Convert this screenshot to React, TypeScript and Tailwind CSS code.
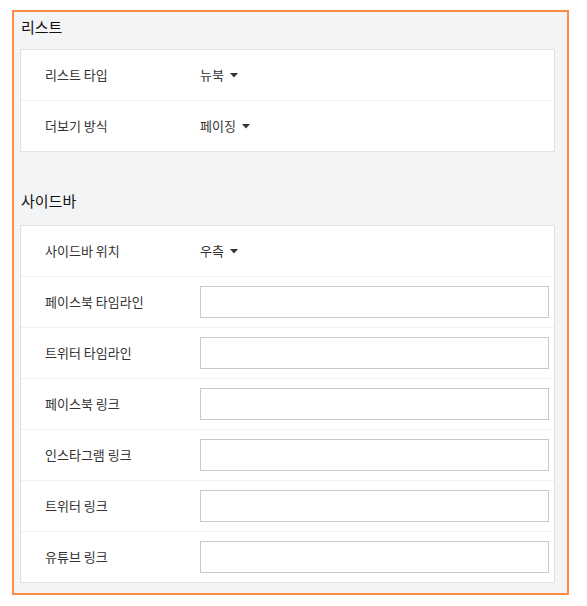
import React from "react";

const font = { fontFamily: '"Noto Sans CJK KR", "Noto Sans", sans-serif' };

function Caret() {
  return (
    <svg width="8" height="5" viewBox="0 0 8 5" className="ml-[6px] mt-[1px]">
      <path d="M0 0 L8 0 L4 4.5 Z" fill="#333" />
    </svg>
  );
}

function Row({ label, children, last }: { label: string; children: React.ReactNode; last?: boolean }) {
  return (
    <div className={`flex items-center ${last ? "h-[50px]" : "h-[51px] border-b border-[#eef0f3]"}`}>
      <div className="w-[179px] shrink-0 pl-[24px] text-[13px] text-[#333]">{label}</div>
      <div className="flex flex-1 items-center pr-[5px]">{children}</div>
    </div>
  );
}

function Select({ value }: { value: string }) {
  return (
    <div className="flex items-center text-[13px] text-[#333]">
      <span>{value}</span>
      <Caret />
    </div>
  );
}

function Input() {
  return <div className="h-[32px] w-full border border-[#c3cad4] bg-white" />;
}

export default function App() {
  const links = ["페이스북 타임라인", "트위터 타임라인", "페이스북 링크", "인스타그램 링크", "트위터 링크", "유튜브 링크"];
  return (
    <div className="h-[606px] w-[587px] bg-white" style={font}>
      <div className="absolute left-[12px] top-[10px] h-[585px] w-[557px] border-2 border-[#ff8c42] bg-[#f3f4f6] pl-[6px] pr-[12px] pt-[4px]">
        <div className="pl-[1px] text-[15px] font-normal leading-[22px] text-[#111]">리스트</div>
        <div className="mt-[11px] border border-[#dfe3e8] bg-white">
          <Row label="리스트 타입">
            <Select value="뉴북" />
          </Row>
          <Row label="더보기 방식" last>
            <Select value="페이징" />
          </Row>
        </div>
        <div className="mt-[38px] pl-[1px] text-[15px] font-normal leading-[22px] text-[#111]">사이드바</div>
        <div className="mt-[13px] border border-[#dfe3e8] bg-white">
          <Row label="사이드바 위치">
            <Select value="우측" />
          </Row>
          {links.map((l, i) => (
            <Row key={l} label={l} last={i === links.length - 1}>
              <Input />
            </Row>
          ))}
        </div>
      </div>
    </div>
  );
}
